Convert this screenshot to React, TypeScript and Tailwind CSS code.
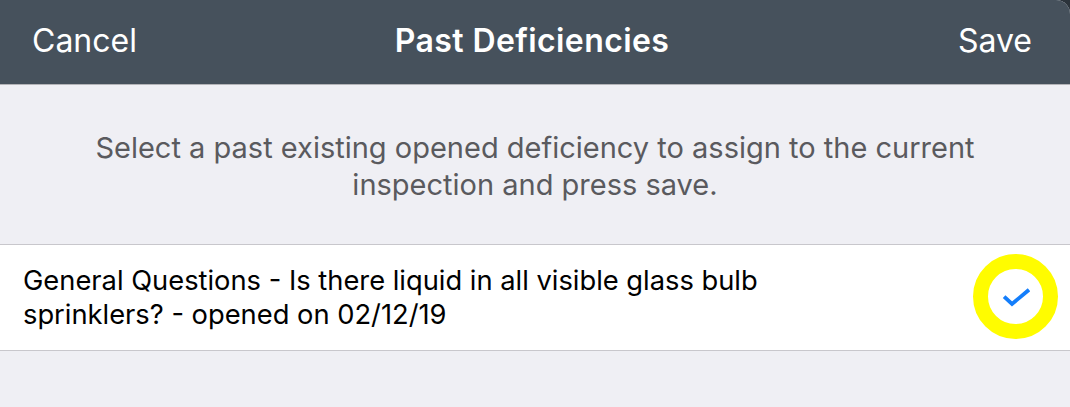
import React from 'react'

const font = { fontFamily: 'Inter, "Noto Sans", sans-serif' }

// Blue tick inside the yellow selection ring
const SelectedMark: React.FC = () => (
  <div className="mb-[2px] flex h-[85px] w-[85px] items-center justify-center rounded-full border-[15px] border-[#fffc00] bg-white">
    <svg width="28" height="22" viewBox="0 0 28 22" fill="none">
      <path d="M3.5 12 L10 18 L25.5 5" stroke="#147efb" strokeWidth="3.8" strokeLinecap="square" />
    </svg>
  </div>
)

export default function App() {
  return (
    <div className="h-[407px] w-[1070px] overflow-hidden bg-[#2b333b]" style={font}>
      <div className="flex h-full flex-col overflow-hidden rounded-tr-[14px] bg-[#efeff4]">
        {/* navigation bar */}
        <div className="grid h-[85px] shrink-0 grid-cols-[1fr_auto_1fr] items-center border-b border-[#b4b4b8] bg-[#46515c] pb-[3px] pl-[32px] pr-[38px] text-[32px] text-white">
          <span className="justify-self-start">Cancel</span>
          <span className="font-semibold tracking-[0.4px]">Past Deficiencies</span>
          <span className="justify-self-end">Save</span>
        </div>

        {/* hint text */}
        <div className="flex h-[159px] shrink-0 items-center justify-center px-10 pt-[2px]">
          <p className="text-center text-[29px] leading-[37px] text-[#5a5a5e]">
            Select a past existing opened deficiency to assign to the current
            <br />
            inspection and press save.
          </p>
        </div>

        {/* deficiency list */}
        <div className="flex h-[107px] shrink-0 items-center justify-between border-y border-[#c8c7cc] bg-white pl-[23px] pr-[12px]">
          <p className="text-[27.3px] leading-[34px] text-black">
            General Questions - Is there liquid in all visible glass bulb
            <br />
            sprinklers? - opened on 02/12/19
          </p>
          <SelectedMark />
        </div>
      </div>
    </div>
  )
}
